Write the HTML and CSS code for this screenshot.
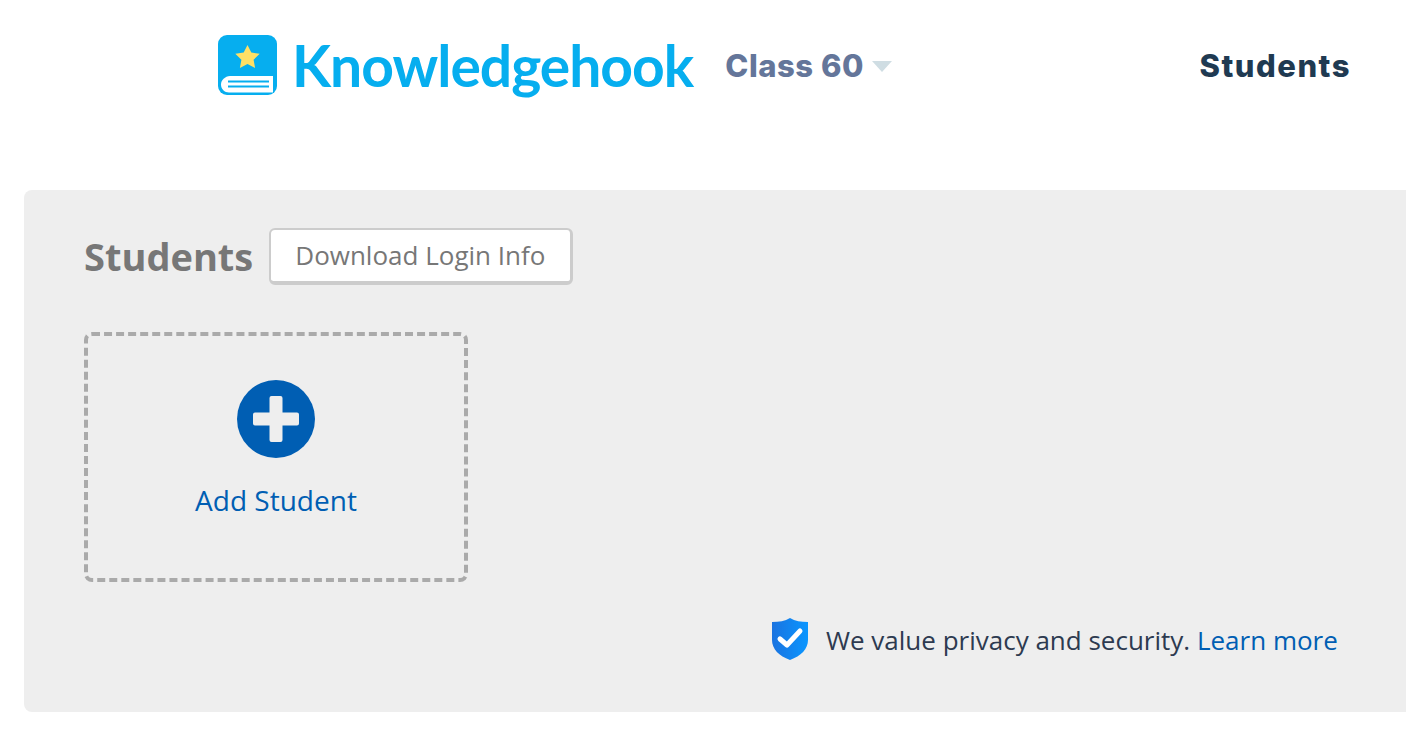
FILE: index.html
```html
<!DOCTYPE html>
<html lang="en">
<head>
    <meta charset="UTF-8">
    <meta name="viewport" content="width=device-width, initial-scale=1.0">
    <title>Students</title>
    <link rel="stylesheet" href="styles.css">
</head>
<body>

    <header class="topbar">
        <a class="brand" href="#">
            <svg class="brand-icon" width="60" height="60" viewBox="0 0 60 60">
                <rect x="0" y="0" width="59" height="60" rx="9" fill="#06aeef"/>
                <path fill="#fff" d="M55 41H12c-5 .3-9 4-9 8.500 0 4.500 3.500 8 8 8h44z"/>
                <path fill="none" stroke="#06aeef" stroke-width="2" d="M10 46.500h41M10 51.500h41"/>
                <path fill="#ffe066" d="M29.500 10l3.800 7.600 8.400 1.200-6.100 5.900 1.500 8.300-7.600-4-7.600 4 1.500-8.300-6.100-5.900 8.400-1.200z"/>
            </svg>
            <span class="brand-name">Knowledgehook</span>
        </a>
        <a class="class-picker" href="#">Class 60<span class="caret"></span></a>
        <nav class="topnav"><a href="#">Students</a></nav>
    </header>

    <main class="panel">
        <div class="panel-head">
            <h1>Students</h1>
            <button type="button" class="btn">Download Login Info</button>
        </div>

        <a class="add-card" href="#">
            <svg width="78" height="78" viewBox="0 0 78 78">
                <circle cx="39" cy="39" r="39" fill="#005eb3"/>
                <path fill="#eee" d="M34.500 16a2 2 0 0 0-2 2v14.500H18a2 2 0 0 0-2 2v9a2 2 0 0 0 2 2h14.500V60a2 2 0 0 0 2 2h9a2 2 0 0 0 2-2V45.500H60a2 2 0 0 0 2-2v-9a2 2 0 0 0-2-2H45.500V18a2 2 0 0 0-2-2z"/>
            </svg>
            <span>Add Student</span>
        </a>

        <div class="privacy">
            <svg class="shield-icon" width="38" height="44" viewBox="0 0 38 44">
                <defs>
                    <linearGradient id="shield" x1="0" x2="1" y1="0" y2="0">
                        <stop offset="0" stop-color="#1a73e0"/>
                        <stop offset="1" stop-color="#0a96ff"/>
                    </linearGradient>
                </defs>
                <path fill="url(#shield)" d="M1 5c7 0 13-1 18-4 5 3 11 4 18 4v18c0 9-7 16-18 20C8 39 1 32 1 23z"/>
                <path fill="none" stroke="#fff" stroke-width="5" stroke-linecap="round" stroke-linejoin="round" d="M9 22l7 6 13-14"/>
            </svg>
            <p>We value privacy and security. <a href="#">Learn more</a></p>
        </div>
    </main>

</body>
</html>
```

FILE: styles.css
```css
* {
    margin: 0;
    padding: 0;
    box-sizing: border-box;
}

body {
    background: #fff;
    font-family: 'Open Sans', sans-serif;
    overflow: hidden;
}

a {
    text-decoration: none;
}

.topbar {
    display: flex;
    align-items: center;
    height: 130px;
    padding: 0 55px 0 218px;
}

.brand {
    display: flex;
    align-items: center;
    gap: 14px;
}

.brand-name {
    font-family: 'Lato', sans-serif;
    font-size: 57px;
    font-weight: 700;
    letter-spacing: -1px;
    color: #06aeef;
}

.class-picker {
    display: flex;
    align-items: center;
    margin-left: 32px;
    font-family: 'Inter', sans-serif;
    font-size: 31px;
    font-weight: 800;
    letter-spacing: 0.55px;
    color: #64769a;
}

.caret {
    width: 0;
    height: 0;
    margin: 3px 0 0 8px;
    border-left: 10px solid transparent;
    border-right: 10px solid transparent;
    border-top: 11px solid #cfdde3;
}

.topnav {
    margin-left: auto;
}

.topnav a {
    font-family: 'Inter', sans-serif;
    font-size: 31px;
    font-weight: 800;
    letter-spacing: 1.5px;
    color: #1f3a52;
}

.panel {
    margin: 60px 0 0 24px;
    height: 522px;
    padding: 38px 60px 0;
    background: #eee;
    border-radius: 8px 0 0 8px;
}

.panel-head {
    display: flex;
    align-items: center;
    gap: 16px;
}

.panel-head h1 {
    padding-bottom: 2px;
    font-size: 38px;
    font-weight: 700;
    color: #777;
}

.btn {
    height: 57px;
    padding: 0 25px 2px 24px;
    background: #fff;
    border: 2px solid #ccc;
    border-right-width: 3px;
    border-bottom-width: 4px;
    border-radius: 6px;
    font-family: 'Open Sans', sans-serif;
    font-size: 26px;
    color: #777;
}

.add-card {
    display: flex;
    flex-direction: column;
    align-items: center;
    gap: 23px;
    width: 384px;
    height: 250px;
    margin-top: 47px;
    padding-top: 44px;
    border: 4px dashed #aaa;
    border-radius: 8px;
    font-size: 28px;
    color: #005eb3;
}

.privacy {
    display: flex;
    align-items: center;
    gap: 17px;
    margin: 35px 0 0 687px;
}

.shield-icon {
    filter: blur(0.5px);
}

.privacy p {
    padding-top: 2px;
    font-size: 26px;
    color: #2d3a50;
    white-space: nowrap;
}

.privacy a {
    color: #005eb3;
}
```
